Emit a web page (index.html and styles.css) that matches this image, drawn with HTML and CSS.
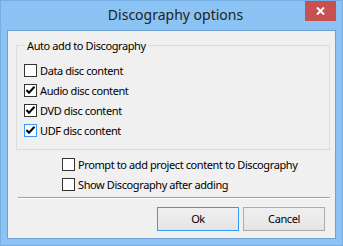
FILE: index.html
```html
<!DOCTYPE html>
<html>
	<head>
		<meta charset="UTF-8">
		<title>Discography options</title>
		<link rel="stylesheet" href="styles.css">
	</head>
	<body>
		<div class="window">
			<div class="titlebar">
				<span class="title">Discography options</span>
				<a href="javascript:;" class="close">
					<svg width="9" height="8" viewBox="0 0 9 8"><path d="M1 0.5 L8 7.5 M8 0.5 L1 7.5" stroke="#fff" stroke-width="2"/></svg>
				</a>
			</div>
			<div class="client">
				<fieldset class="group">
					<legend>Auto add to Discography</legend>
					<label class="row"><span class="box"></span>Data disc content</label>
					<label class="row"><span class="box"><svg class="tick" width="11" height="11" viewBox="0 0 11 11"><path d="M1.5 5 L4 7.8 L9.5 1.8" fill="none" stroke="#000" stroke-width="2"/></svg></span>Audio disc content</label>
					<label class="row"><span class="box"><svg class="tick" width="11" height="11" viewBox="0 0 11 11"><path d="M1.5 5 L4 7.8 L9.5 1.8" fill="none" stroke="#000" stroke-width="2"/></svg></span>DVD disc content</label>
					<label class="row"><span class="box focus"><svg class="tick" width="11" height="11" viewBox="0 0 11 11"><path d="M1.5 5 L4 7.8 L9.5 1.8" fill="none" stroke="#000" stroke-width="2"/></svg></span>UDF disc content</label>
				</fieldset>
				<div class="extra">
					<label class="row"><span class="box"></span>Prompt to add project content to Discography</label>
					<label class="row"><span class="box"></span>Show Discography after adding</label>
				</div>
				<div class="sep"></div>
				<div class="btns">
					<a href="javascript:;" class="btn default">Ok</a>
					<a href="javascript:;" class="btn">Cancel</a>
				</div>
			</div>
		</div>
	</body>
</html>
```
FILE: styles.css
```css
html, body{
    margin: 0;
    padding: 0;
}
body{
    font-family: "Noto Sans", "Open Sans", sans-serif;
    font-size: 11px;
    letter-spacing: -0.4px;
    color: #000;
}
.window{
    box-sizing: border-box;
    width: 343px;
    height: 246px;
    background: #8bc3f4;
    border: 1px solid #76aee3;
    display: flex;
    flex-direction: column;
}
.titlebar{
    height: 29px;
    display: flex;
    align-items: flex-start;
    position: relative;
}
.title{
    flex: 1;
    text-align: center;
    font-size: 14px;
    letter-spacing: 0;
    line-height: 20px;
    padding: 4px 0 0 8px;
    color: #222;
}
.close{
    position: absolute;
    top: 0;
    right: 6px;
    width: 31px;
    height: 20px;
    background: #c75050;
    display: flex;
    align-items: center;
    justify-content: center;
}
.client{
    flex: 1;
    margin: 0 6px 6px 6px;
    border: 1px solid #6f9fd3;
    background: #f0f0f0;
    display: flex;
    flex-direction: column;
}
.group{
    margin: 7px 5px 0 8px;
    padding: 0 8px 9px 7px;
    border: 1px solid #dcdcdc;
    min-width: 0;
}
.group legend{
    padding: 0 2px;
    margin-left: 1px;
    line-height: 15px;
}
.row{
    display: flex;
    align-items: center;
    height: 20px;
    white-space: nowrap;
}
.group .row:first-of-type{
    margin-top: 7px;
}
.box{
    box-sizing: border-box;
    width: 13px;
    height: 13px;
    border: 1px solid #333;
    background: #fff;
    margin-right: 3px;
    flex: none;
}
.box.focus{
    border-color: #3399ff;
}
.tick{
    display: block;
}
.extra{
    padding: 4px 0 0 54px;
}
.sep{
    margin: 3px 5px 0 10px;
    height: 1px;
    background: #a0a0a0;
    border-bottom: 1px solid #fff;
}
.btns{
    display: flex;
    justify-content: flex-end;
    gap: 4px;
    margin: 8px 10px 0 0;
}
.btn{
    box-sizing: border-box;
    width: 82px;
    height: 24px;
    line-height: 22px;
    text-align: center;
    color: #000;
    text-decoration: none;
    border: 1px solid #acacac;
    background: linear-gradient(#f0f0f0, #e5e5e5);
}
.btn.default{
    border-color: #3399ff;
}
```
